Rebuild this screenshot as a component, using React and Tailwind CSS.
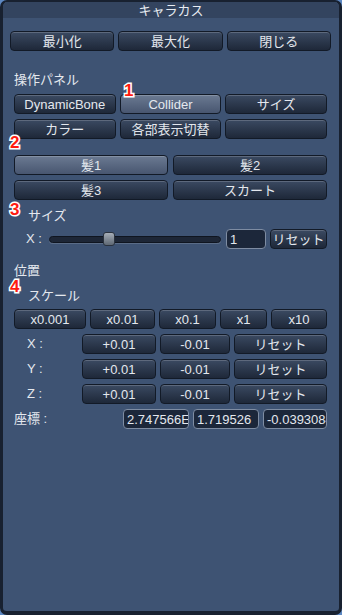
const font = "font-['Liberation_Sans','Noto_Sans_CJK_JP',sans-serif]";

const Btn = ({ label, hot, className = "" }) => (
  <div
    className={`h-[20px] flex items-center justify-center rounded-[4px] border border-[#121a27] text-[13px] leading-none text-[#e4e8ee] shadow-[inset_0_1px_0_rgba(255,255,255,0.18)] ${
      hot
        ? "bg-gradient-to-b from-[#6b7a92] to-[#485670]"
        : "bg-gradient-to-b from-[#3b4a62] to-[#1e2839]"
    } ${className}`}
  >
    {label}
  </div>
);

const Field = ({ value, className = "" }) => (
  <div
    className={`h-[20px] min-w-0 flex items-center overflow-hidden whitespace-nowrap rounded-[4px] border border-[#7e8ca2] bg-[#1c273a] pl-[3px] text-[13px] leading-none text-[#e4e8ee] ${className}`}
  >
    {value}
  </div>
);

const Num = ({ n, className }) => (
  <span
    className={`absolute text-[17px] font-bold leading-none text-[#ff1a10] [-webkit-text-stroke:3px_white] [paint-order:stroke_fill] ${className}`}
  >
    {n}
  </span>
);

const Label = ({ text, className = "" }) => (
  <div className={`h-[16px] flex items-center text-[13px] leading-none text-[#e4e8ee] ${className}`}>
    {text}
  </div>
);

const AxisRow = ({ axis }) => (
  <div className="mt-[5px] flex">
    <div className="w-[68px] shrink-0 pl-[13px] flex items-center text-[13px] text-[#e4e8ee]">{axis} :</div>
    <div className="flex-1 min-w-0 flex gap-[4px]">
      <Btn label="+0.01" className="w-[74px] shrink-0" />
      <Btn label="-0.01" className="w-[70px] shrink-0" />
      <Btn label="リセット" className="flex-1" />
    </div>
  </div>
);

export default function App() {
  return (
    <div className={`w-[342px] h-[615px] bg-[#5d88c2] ${font}`}>
      <div className="relative h-full flex flex-col rounded-[7px] border-x-[3px] border-t-[2px] border-b-[4px] border-[#182130] bg-[#3e5373] overflow-hidden">
        <div className="h-[16px] flex items-center justify-center bg-[#33445f] text-[13px] leading-none text-[#e8ecf2]">
          キャラカス
        </div>

        <div className="px-[7px] pr-[8px] mt-[13px] grid grid-cols-3 gap-[4px]">
          <Btn label="最小化" />
          <Btn label="最大化" />
          <Btn label="閉じる" />
        </div>

        <div className="pl-[11px] pr-[12px] flex flex-col">
          <Label text="操作パネル" className="mt-[20px]" />
          <div className="mt-[7px] grid grid-cols-3 gap-[4px]">
            <Btn label="DynamicBone" />
            <Btn label="Collider" hot />
            <Btn label="サイズ" />
          </div>
          <div className="mt-[5px] grid grid-cols-3 gap-[4px]">
            <Btn label="カラー" />
            <Btn label="各部表示切替" />
            <Btn label="" />
          </div>

          <div className="mt-[16px] grid grid-cols-2 gap-[5px]">
            <Btn label="髪1" hot />
            <Btn label="髪2" />
          </div>
          <div className="mt-[5px] grid grid-cols-2 gap-[5px]">
            <Btn label="髪3" />
            <Btn label="スカート" />
          </div>

          <Label text="サイズ" className="mt-[7px] pl-[14px]" />
          <div className="mt-[6px] flex items-center">
            <div className="w-[35px] shrink-0 pl-[12px] text-[13px] text-[#e4e8ee]">X :</div>
            <div className="relative w-[172px] shrink-0 h-[7px] rounded-full border border-[#0f1520] bg-[#1d2636] shadow-[0_1px_0_rgba(255,255,255,0.15)]">
              <div className="absolute left-[53px] top-[-5px] w-[12px] h-[14px] rounded-[3px] border border-[#2a323e] bg-gradient-to-b from-[#a6aeb8] to-[#5e6874]" />
            </div>
            <Field value="1" className="ml-[5px] w-[40px] shrink-0" />
            <Btn label="リセット" className="ml-[4px] flex-1" />
          </div>

          <Label text="位置" className="mt-[13px]" />
          <Label text="スケール" className="mt-[9px] pl-[14px]" />

          <div className="mt-[6px] flex gap-[4px]">
            <Btn label="x0.001" className="w-[72px] shrink-0" />
            <Btn label="x0.01" className="w-[65px] shrink-0" />
            <Btn label="x0.1" className="w-[57px] shrink-0" />
            <Btn label="x1" className="w-[47px] shrink-0" />
            <Btn label="x10" className="flex-1" />
          </div>
          <AxisRow axis="X" />
          <AxisRow axis="Y" />
          <AxisRow axis="Z" />

          <div className="mt-[5px] flex">
            <div className="w-[109px] shrink-0 flex items-center text-[13px] text-[#e4e8ee]">座標 :</div>
            <div className="flex-1 min-w-0 flex gap-[4px]">
              <Field value="2.747566E" className="w-[66px] shrink-0" />
              <Field value="1.719526" className="w-[66px] shrink-0" />
              <Field value="-0.0393084" className="flex-1" />
            </div>
          </div>
        </div>

        <Num n="1" className="left-[121px] top-[80px]" />
        <Num n="2" className="left-[7px] top-[132px]" />
        <Num n="3" className="left-[7px] top-[199px]" />
        <Num n="4" className="left-[7px] top-[276px]" />
      </div>
    </div>
  );
}
